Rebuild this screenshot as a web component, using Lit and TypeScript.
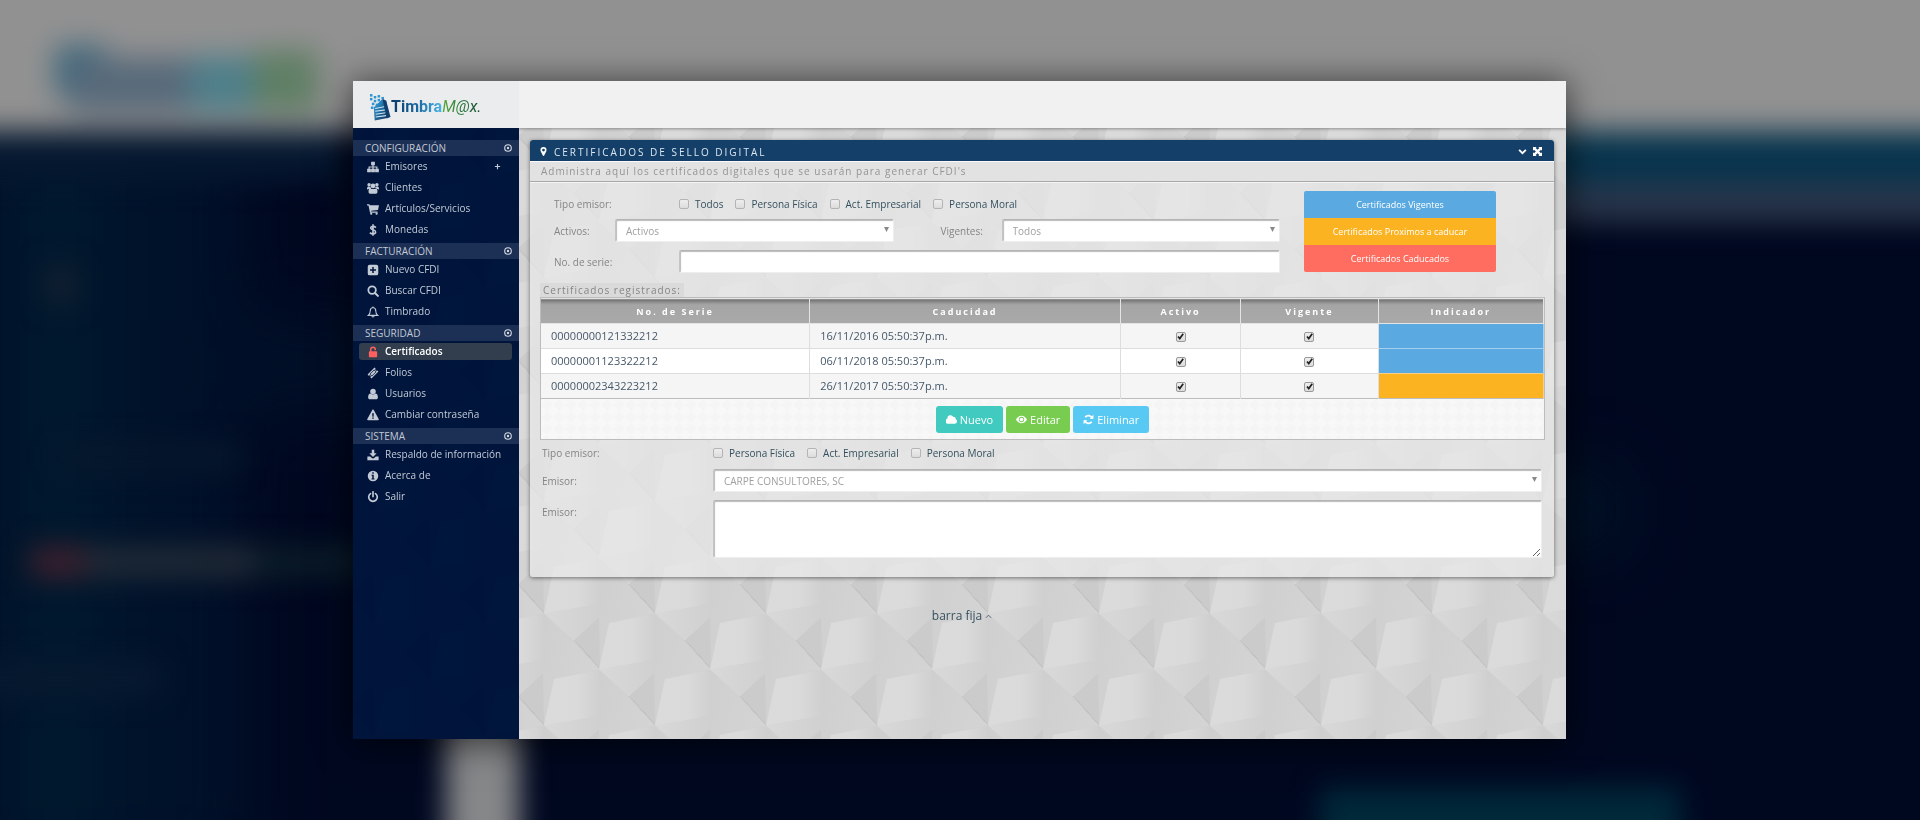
import { LitElement, html, css, svg, unsafeCSS } from "lit";
import { customElement, property, state } from "lit/decorators.js";
import { classMap } from "lit/directives/class-map.js";

const asUrl = (markup: string) => unsafeCSS(`url("data:image/svg+xml,${encodeURIComponent(markup)}")`);

// One faceted cell, anchored on its bottom tip; the tile repeats it in a brick layout.
const cell = (x: number, y: number) => `
  <g transform="translate(${x} ${y})">
    <polygon points="25,-82 81,-27 36,-17 26,29 25,-23" fill="url(#m)"/>
    <polygon points="0,0 25,-23 26,29" fill="#cbcbcb"/>
    <polygon points="0,0 12,13 26,29" stroke="#c6c6c6"/>
    <polygon points="-30,-27 -20,-73 25,-82 25,-23 0,0" fill="url(#l)"/>
    <polygon points="-30,-27 25,-36 25,-23 0,0" fill="url(#k)"/>
  </g>`;
const tile = `<svg xmlns="http://www.w3.org/2000/svg" width="111" height="112" viewBox="0 0 111 112">
  <defs>
    <linearGradient id="l" x1="0" y1="0" x2="1" y2="0"><stop offset="0" stop-color="#dbdbdb"/><stop offset=".6" stop-color="#dadada"/><stop offset="1" stop-color="#d0d0d0"/></linearGradient>
    <linearGradient id="k" x1="0" y1="0" x2="1" y2="0"><stop offset="0" stop-color="#d9d9d9"/><stop offset="1" stop-color="#d0d0d0"/></linearGradient>
    <linearGradient id="m" x1="0" y1="0" x2="1" y2=".4"><stop offset="0" stop-color="#cfcfcf"/><stop offset="1" stop-color="#d4d4d4"/></linearGradient>
  </defs>
  <rect width="111" height="112" fill="#d1d1d1"/>
  ${[-1, 0, 1, 2].map((r) => [-1, 0, 1].map((c) => cell(c * 111, r * 112) + cell(c * 111 + 56, r * 112 + 56)).join("")).join("")}
</svg>`;
const arrow = `<svg xmlns="http://www.w3.org/2000/svg" width="5" height="5"><path d="M0 0h5L2.500 5z" fill="#888"/></svg>`;
const check = `<svg xmlns="http://www.w3.org/2000/svg" viewBox="0 0 10 10"><path d="M2.200 5l2 2.300L8 2" fill="none" stroke="#222" stroke-width="1.900"/></svg>`;
const weave = `<svg xmlns="http://www.w3.org/2000/svg" width="12" height="12"><path d="M0 6l6-6 6 6-6 6z" fill="#f5f5f5"/></svg>`;

const icons: Record<string, unknown> = {
  sitemap: svg`<path d="M5.500 1h5v4.500H8.800v1.700H14v3h1.800v4.800H10.800v-4.800h1.600V8.800H8.800v1.400h1.700v4.800h-5v-4.800h1.700V8.800H3.600v1.400h1.600v4.800H.2v-4.800H2v-3h5.200V5.500H5.500z"/>`,
  users: svg`<circle cx="2.800" cy="3.600" r="2.300"/><circle cx="13.200" cy="3.600" r="2.300"/><circle cx="8" cy="5.200" r="3.100"/><path d="M0 9.500C0 7 .8 5.700 2.500 6.100c1 .4 1.900.3 2.200 0 0 1.500.6 2.400 1.300 3.300H2.500C.8 10 0 10.500 0 9.500zm16 0c0-2.500-.8-3.800-2.500-3.400-1 .4-1.900.3-2.200 0 0 1.500-.6 2.400-1.300 3.300h3.500c1.700.6 2.500 1.100 2.500.1zM2 13c0-2.600 1-4.600 2.900-4.500 1.800 1.100 4.400 1.100 6.200 0C13 8.400 14 10.400 14 13c0 1.600-.9 2.500-2.200 2.500H4.200C2.900 15.500 2 14.600 2 13z"/>`,
  cart: svg`<path d="M0 1.500h3.200l.5 1.500H16l-1.300 6.300-9.200 1.100.2.900H14v1.600H4L2 3.300H0z"/><circle cx="5.600" cy="14.300" r="1.500"/><circle cx="12.800" cy="14.300" r="1.500"/>`,
  dollar: svg`<path d="M11.800 4.800C10.700 3.600 9.500 3.200 8 3.200c-1.900 0-3.100.8-3.100 2.200 0 3.200 6.600 1.600 6.600 5.200 0 1.600-1.400 2.600-3.500 2.600-1.700 0-3.100-.6-4.100-1.700M8 .2v15.600" fill="none" stroke="currentColor" stroke-width="2.100"/>`,
  plusbox: svg`<path fill-rule="evenodd" d="M3.500 1h9A2.500 2.500 0 0 1 15 3.500v9a2.500 2.500 0 0 1-2.500 2.500h-9A2.500 2.500 0 0 1 1 12.500v-9A2.500 2.500 0 0 1 3.500 1zM7 4v3H4v2h3v3h2V9h3V7H9V4z"/>`,
  search: svg`<circle cx="6.800" cy="6.800" r="5" fill="none" stroke="currentColor" stroke-width="2.400"/><path d="M10.700 10.700l3.800 3.800" stroke="currentColor" stroke-width="2.800" stroke-linecap="round"/>`,
  bell: svg`<path d="M8 2C5.500 2.300 4.300 4 4.300 6.500c0 3-.8 4.700-2.600 6h12.600c-1.800-1.300-2.600-3-2.600-6C11.700 4 10.500 2.300 8 2zM8 .6V2M6.500 13c.1 1.100.7 1.700 1.500 1.700s1.400-.6 1.500-1.700" fill="none" stroke="currentColor" stroke-width="1.400"/>`,
  unlock: svg`<path d="M5 7.500V4.600a3 3 0 0 1 6 0v1" fill="none" stroke="currentColor" stroke-width="2"/><rect x="2.500" y="7" width="11" height="8" rx="1"/>`,
  ticket: svg`<path fill-rule="evenodd" d="M10 .8l1.500 1.500a1.500 1.500 0 0 0 2.200 2.200L15.200 6 6 15.200l-1.500-1.500a1.500 1.500 0 0 0-2.200-2.200L.8 10zM9.600 3.400L3.400 9.600l3 3 6.200-6.200zm0 1.300l1.700 1.700-4.900 4.900-1.700-1.700z"/><path d="M9.600 4.900l1.500 1.500-4.700 4.700-1.500-1.500z"/>`,
  user: svg`<circle cx="8" cy="4.800" r="3.700"/><path d="M1.500 12.600c0-3.300 1.200-5 3.400-5.200 1.900 1.500 4.300 1.500 6.200 0 2.200.2 3.400 1.900 3.400 5.200 0 1.600-1 2.400-2.300 2.400H3.800c-1.300 0-2.300-.8-2.300-2.400z"/>`,
  warning: svg`<path fill-rule="evenodd" d="M8 .8c.5 0 .8.200 1 .6l6.600 12c.4.800 0 1.600-1 1.600H1.400c-1 0-1.400-.8-1-1.600L7 1.400c.2-.4.500-.6 1-.6zM6.900 5.500l.3 4.700h1.600l.3-4.700zm.1 5.700v1.900h2v-1.900z"/>`,
  download: svg`<path d="M6.300 1h3.400v4.500h3.200L8 10.500l-4.900-5h3.200zM.5 10h3.800L6 11.700a2.800 2.800 0 0 0 4 0L11.700 10h3.800v5H.5z"/>`,
  info: svg`<path fill-rule="evenodd" d="M8 1a7 7 0 1 1 0 14A7 7 0 0 1 8 1zM7 3v2h2V3zM6 6.300v1.200h1v3.800H6v1.300h4v-1.300H9v-5z"/>`,
  power: svg`<path d="M4.700 3.400a5.700 5.700 0 1 0 6.600 0M8 1v6.500" fill="none" stroke="currentColor" stroke-width="2.200" stroke-linecap="round"/>`,
  target: svg`<circle cx="8" cy="8" r="6.600" fill="none" stroke="currentColor" stroke-width="2.200"/><circle cx="8" cy="8" r="2.400"/>`,
  plus: svg`<path d="M8 2v12M2 8h12" stroke="currentColor" stroke-width="2.600"/>`,
  marker: svg`<path fill-rule="evenodd" d="M8 0a5.400 5.400 0 0 1 5.400 5.400c0 1.500-.5 2.300-1 3.300L9.200 15.200c-.5 1-1.900 1-2.400 0L3.600 8.700c-.5-1-1-1.800-1-3.300A5.400 5.400 0 0 1 8 0zm0 2.900a2.500 2.500 0 1 0 0 5 2.500 2.500 0 0 0 0-5z"/>`,
  chevron: svg`<path d="M2 5l6 6 6-6" fill="none" stroke="currentColor" stroke-width="3.200"/>`,
  expand: svg`<path d="M0 0h6.500L4.700 1.800 8 5.100l3.300-3.300L9.500 0H16v6.500l-1.800-1.800L10.900 8l3.300 3.300L16 9.500V16H9.500l1.800-1.800L8 10.900l-3.300 3.300L6.500 16H0V9.500l1.800 1.800L5.100 8 1.800 4.700 0 6.500z"/>`,
  cloud: svg`<path d="M3.700 14A3.700 3.700 0 0 1 1.900 6.800 4.600 4.600 0 0 1 10.600 4.300a2.700 2.700 0 0 1 3.400 3.300A3.300 3.300 0 0 1 12.900 14z"/>`,
  eye: svg`<path fill-rule="evenodd" d="M8 2.600c3.300 0 6.200 2 8 5.400-1.800 3.400-4.700 5.400-8 5.400S1.800 11.400 0 8c1.800-3.400 4.700-5.400 8-5.400zm0 1.500a3.900 3.900 0 1 0 0 7.800 3.900 3.900 0 0 0 0-7.800z"/><circle cx="8" cy="8" r="2.700"/>`,
  refresh: svg`<path d="M13.500 6.500A5.800 5.800 0 0 0 3.300 4.600M2.500 9.500a5.800 5.800 0 0 0 10.200 1.900" fill="none" stroke="currentColor" stroke-width="2.500"/><path d="M15.200 1.200v5.600H9.600zM.8 14.800V9.200h5.600z"/>`,
  caret: svg`<path d="M2 11l6-6 6 6" fill="none" stroke="currentColor" stroke-width="1.800"/>`,
};
const icon = (name: string, cls = "") => html`<svg class="icon ${cls}" viewBox="0 0 16 16" fill="currentColor" aria-hidden="true">${icons[name]}</svg>`;

const shared = css`
  :host, * { box-sizing: border-box; }
  .icon { width: 12px; height: 12px; flex: none; display: block; }
  button { font: inherit; color: inherit; border: 0; background: none; padding: 0; cursor: pointer; }
`;

interface Entry { label: string; icon: string; active?: boolean; expandable?: boolean; }
const menu: { title: string; entries: Entry[] }[] = [
  { title: "CONFIGURACIÓN", entries: [
    { label: "Emisores", icon: "sitemap", expandable: true },
    { label: "Clientes", icon: "users" },
    { label: "Artículos/Servicios", icon: "cart" },
    { label: "Monedas", icon: "dollar" } ] },
  { title: "FACTURACIÓN", entries: [
    { label: "Nuevo CFDI", icon: "plusbox" },
    { label: "Buscar CFDI", icon: "search" },
    { label: "Timbrado", icon: "bell" } ] },
  { title: "SEGURIDAD", entries: [
    { label: "Certificados", icon: "unlock", active: true },
    { label: "Folios", icon: "ticket" },
    { label: "Usuarios", icon: "user" },
    { label: "Cambiar contraseña", icon: "warning" } ] },
  { title: "SISTEMA", entries: [
    { label: "Respaldo de información", icon: "download" },
    { label: "Acerca de", icon: "info" },
    { label: "Salir", icon: "power" } ] },
];

@customElement("side-menu")
export class SideMenu extends LitElement {
  static styles = [shared, css`
    :host { display: block; padding-top: 12px; color: #c2cad6; position: relative; background: #001030; }
    :host::before { content: ""; position: absolute; inset: 0; background: ${asUrl(tile)} -4px 19px; mix-blend-mode: color-dodge; opacity: .06; }
    .group { position: relative; padding-bottom: 2px; }
    .title { display: flex; align-items: center; justify-content: space-between; height: 16px; margin: 0; padding: 0 7px 0 12px; background: #1c2f55; font-size: 10px; font-weight: 400; line-height: 16px; }
    .title .icon { width: 8px; height: 8px; color: #d5dbe6; }
    .list { list-style: none; margin: 0; padding: 0 7px 1px 6px; }
    .link { display: flex; align-items: center; gap: 6px; height: 17px; margin: 2px 0; padding: 0 8px; border-radius: 3px; color: inherit; text-decoration: none; font-size: 10px; line-height: 17px; white-space: nowrap; }
    .item { display: flow-root; height: 21px; }
    .active { background: #323e4e; color: #fff; font-weight: 600; }
    .active .icon { color: #ff5f5f; }
    .more { width: 7px; height: 7px; margin: 0 3px 0 auto; }
  `];
  render() {
    return html`<nav aria-label="Principal">${menu.map((g) => html`
      <section class="group">
        <h2 class="title">${g.title}${icon("target")}</h2>
        <ul class="list">${g.entries.map((e) => html`
          <li class="item"><a href="#" class=${classMap({ link: true, active: !!e.active })}>
            ${icon(e.icon)}<span>${e.label}</span>${e.expandable ? icon("plus", "more") : ""}
          </a></li>`)}</ul>
      </section>`)}</nav>`;
  }
}

@customElement("brand-logo")
export class BrandLogo extends LitElement {
  static styles = [shared, css`
    :host { display: flex; align-items: center; height: 47px; padding: 5px 0 0 16px; background: #ebecee; }
    .mark { width: 22px; height: 28px; flex: none; }
    .name { font: 700 16px/24px Roboto, sans-serif; white-space: nowrap; }
    .blue { color: transparent; background: linear-gradient(90deg, #0b3a66, #17679f 50%, #46b4e6); background-clip: text; -webkit-background-clip: text; }
    .green { color: transparent; background: linear-gradient(90deg, #5aa93c, #2a7a3c 50%, #144a30); background-clip: text; -webkit-background-clip: text; font-weight: 400; font-style: italic; }
  `];
  render() {
    const dots = [[1, 1], [5, 3], [1, 5], [9, 2], [13, 4], [5, 7], [9, 6], [3, 10], [7, 11], [13, 8], [2, 14], [11, 10]];
    return html`
      <svg class="mark" viewBox="0 0 23 29" aria-hidden="true">
        <defs><linearGradient id="g" x1="0" y1="0" x2="1" y2="1"><stop offset="0" stop-color="#3aa9e4"/><stop offset="1" stop-color="#0a2f5a"/></linearGradient></defs>
        ${dots.map(([x, y]) => svg`<rect x=${x} y=${y} width="2.600" height="2.600" fill="#2e95d0"/>`)}
        <path d="M5 15l8-8 5 1 1 18-13 2.500z" fill="url(#g)"/>
        <path d="M6.500 16l10.500-2M6.500 19l11-1.500M7 22l10.500-1.500M7 25l11-1.500" stroke="#cfe4f2" stroke-width="1.100"/>
        <path d="M14 6l4 2 4.500 17-4 1.500z" fill="#0f3f6e"/>
      </svg>
      <span class="name"><span class="blue">Timbra</span><span class="green">M@x.</span></span>`;
  }
}

const fields = css`
  .checks { display: flex; align-items: center; gap: 12px; }
  .check { display: flex; align-items: center; gap: 6px; color: #34505e; white-space: nowrap; }
  input[type="checkbox"] { appearance: none; width: 10px; height: 10px; margin: 0; border: 1px solid #b4b4b4; border-radius: 2px; background: linear-gradient(#eee, #dcdcdc); display: inline-block; vertical-align: middle; }
  input[type="checkbox"]:checked { background: ${asUrl(check)} center / 9px 9px no-repeat, linear-gradient(#eee, #dcdcdc); }
  .label { color: #858585; white-space: nowrap; }
  .control { display: block; width: 100%; min-width: 0; height: 23px; margin: 0; padding: 0 10px; border: 1px solid #ccc; border-color: #b4b4b4 #eee #eee #c4c4c4; border-radius: 2px; background: #fff; box-shadow: inset 1px 1px 1px #bbb; font: 10px/20px "Open Sans", sans-serif; color: #a0a0a0; }
  select.control { appearance: none; background: #fff ${asUrl(arrow)} right 4px top 7px no-repeat; }
`;

interface Certificate { serial: string; expires: string; active: boolean; valid: boolean; status: "ok" | "soon"; }

@customElement("certificate-panel")
export class CertificatePanel extends LitElement {
  @property({ attribute: false }) rows: Certificate[] = [
    { serial: "00000000121332212", expires: "16/11/2016 05:50:37p.m.", active: true, valid: true, status: "ok" },
    { serial: "00000001123322212", expires: "06/11/2018 05:50:37p.m.", active: true, valid: true, status: "ok" },
    { serial: "00000002343223212", expires: "26/11/2017 05:50:37p.m.", active: true, valid: true, status: "soon" },
  ];
  @state() private open = true;

  static styles = [shared, fields, css`
    :host { display: block; border-radius: 3px; background: rgba(234, 234, 234, .7); box-shadow: 0 1px 4px rgba(0, 0, 0, .5); font-size: 10px; line-height: 16px; }
    .head { display: flex; align-items: center; gap: 6px; height: 21px; padding: 2px 12px 0 9px; border-radius: 3px 3px 0 0; background: #143f69; color: #dbe6f0; }
    .head .icon { width: 9px; height: 9px; color: #fff; }
    .heading { margin: 0 auto 0 0; font-size: 10px; font-weight: 400; line-height: 18px; letter-spacing: 2px; }
    .intro { margin: 0; height: 21px; padding-left: 11px; border-top: 1px solid #fafafa; border-bottom: 1px solid #a8a8a8; background: #e2e2e2; color: #949494; line-height: 18px; letter-spacing: 1px; box-shadow: 0 1px 0 #f4f4f4; }
    .filters { display: grid; grid-template-columns: minmax(0, 1fr) 192px; gap: 24px; padding: 9px 58px 0 24px; }
    .fields { display: flex; flex-direction: column; }
    .row { display: grid; grid-template-columns: 125px minmax(0, 1fr); align-items: center; }
    .first { height: 26px; margin-bottom: 2px; }
    .pair { grid-template-columns: 61px minmax(0, 325fr) 61px minmax(0, 278fr); margin-bottom: 8px; }
    .left { margin-right: 47px; }
    .legend { display: flex; flex-direction: column; }
    .key { height: 27px; color: #fff; font-size: 9px; line-height: 27px; text-align: center; }
    .key:first-child { border-radius: 2px 2px 0 0; }
    .key:last-child { border-radius: 0 0 2px 2px; }
    .ok { background: #5aaae1; }
    .soon { background: #fcb322; }
    .late { background: #ff6c60; }
    .caption { display: block; width: max-content; height: 14px; margin: 10px 0 0 10px; padding: 0 3px; background: #dadada; color: #858585; font-size: 10px; line-height: 14px; letter-spacing: 1px; }
    .grid { margin: 0 9px 0 10px; border: 1px solid #bcbcbc; background: #f5f5f5; }
    .table { width: 100%; border-collapse: collapse; table-layout: fixed; color: #46586a; border-bottom: 1px solid #bdbdbd; font-size: 11px; }
    .table th { height: 25px; padding: 2px 0 0; border: solid #e4e4e4; border-width: 1px 1px 1px 0; background: linear-gradient(#707070, #a5a5a5 5px, #a9a9a9); color: #fff; font-size: 9px; font-weight: 700; line-height: 20px; letter-spacing: 2px; }
    .table td { height: 25px; padding: 0 10px; border: solid #ddd; border-width: 1px 1px 0 0; line-height: 20px; }
    .table tr:nth-child(odd) td { background-color: #f5f5f5; }
    .table tr:nth-child(even) td { background-color: #fff; }
    .table tr td.center { text-align: center; line-height: 10px; }
    .table tr td.ok { background-color: #5aaae1; border-color: #a6d0ef; }
    .table tr td.soon { background-color: #fcb322; border-color: #f3d08a; }
    .c1 { width: 26.800%; } .c2 { width: 31%; } .c3 { width: 12%; } .c4 { width: 13.700%; }
    .table input { border-color: #999; }
    .actions { display: flex; justify-content: center; gap: 3px; height: 40px; padding-top: 7px; background: #f8f8f8 ${asUrl(weave)}; }
    .button { display: flex; align-items: center; gap: 3px; height: 27px; padding: 0 10px; border-radius: 3px; color: #fff; font-size: 11px; line-height: 27px; }
    .teal { background: #41cac0; } .green { background: #78cd51; } .sky { background: #58c9f3; }
    .button .icon { width: 11px; height: 11px; }
    .detail { display: grid; grid-template-columns: 171px minmax(0, 1fr); padding: 5px 12px 19px; row-gap: 8px; align-items: center; }
    .top { align-self: start; padding-top: 4px; }
    textarea.control { height: 58px; resize: vertical; }
  `];

  private checks(prefix: string, names: string[]) {
    return html`<div class="checks" role="group" aria-label="Tipo emisor">${names.map((n, i) => html`
      <label class="check" for="${prefix}${i}"><input type="checkbox" id="${prefix}${i}" />${n}</label>`)}</div>`;
  }

  render() {
    return html`
      <header class="head">${icon("marker")}
        <h1 class="heading">CERTIFICADOS DE SELLO DIGITAL</h1>
        <button aria-label="Contraer" @click=${() => (this.open = !this.open)}>${icon("chevron")}</button>
        <button aria-label="Expandir">${icon("expand")}</button>
      </header>
      ${this.open ? this.body() : ""}`;
  }

  private body() {
    return html`
      <p class="intro">Administra aquí los certificados digitales que se usarán para generar CFDI's</p>
      <div class="filters">
        <div class="fields">
          <div class="row first"><span class="label">Tipo emisor:</span>${this.checks("f", ["Todos", "Persona Física", "Act. Empresarial", "Persona Moral"])}</div>
          <div class="row pair">
            <label class="label" for="act">Activos:</label>
            <div class="left"><select class="control" id="act"><option>Activos</option></select></div>
            <label class="label" for="vig">Vigentes:</label>
            <select class="control" id="vig"><option>Todos</option></select>
          </div>
          <div class="row"><label class="label" for="serie">No. de serie:</label><input class="control" id="serie" type="text" /></div>
        </div>
        <div class="legend">
          <button class="key ok">Certificados Vigentes</button>
          <button class="key soon">Certificados Proximos a caducar</button>
          <button class="key late">Certificados Caducados</button>
        </div>
      </div>
      <span class="caption" id="cap">Certificados registrados:</span>
      <div class="grid">
        <table class="table" aria-labelledby="cap">
          <thead><tr><th class="c1">No. de Serie</th><th class="c2">Caducidad</th><th class="c3">Activo</th><th class="c4">Vigente</th><th>Indicador</th></tr></thead>
          <tbody>${this.rows.map((r) => html`<tr>
            <td>${r.serial}</td><td>${r.expires}</td>
            <td class="center"><input type="checkbox" aria-label="Activo" .checked=${r.active} /></td>
            <td class="center"><input type="checkbox" aria-label="Vigente" .checked=${r.valid} /></td>
            <td class=${r.status}></td></tr>`)}</tbody>
        </table>
        <div class="actions">
          <button class="button teal">${icon("cloud")}Nuevo</button>
          <button class="button green">${icon("eye")}Editar</button>
          <button class="button sky">${icon("refresh")}Eliminar</button>
        </div>
      </div>
      <div class="detail">
        <span class="label">Tipo emisor:</span>${this.checks("d", ["Persona Física", "Act. Empresarial", "Persona Moral"])}
        <label class="label" for="em">Emisor:</label><select class="control" id="em"><option>CARPE CONSULTORES, SC</option></select>
        <label class="label top" for="tx">Emisor:</label><textarea class="control" id="tx"></textarea>
      </div>`;
  }
}

@customElement("app-root")
export class AppRoot extends LitElement {
  static styles = [shared, css`
    :host { display: flex; position: relative; min-height: 100vh; padding: 81px 354px 81px 353px; font-family: "Open Sans", sans-serif; background: #000820; overflow: hidden; }
    .backdrop { position: absolute; inset: 0; width: 100%; height: 100%; }
    .window { position: relative; flex: 1; min-width: 0; display: grid; grid-template: auto 1fr / 166px minmax(0, 1fr); box-shadow: 0 3px 32px 2px rgba(0, 0, 0, .6); }
    .bar { background: #f1f1f1; box-shadow: 0 1px 3px rgba(0, 0, 0, .35); clip-path: inset(0 0 -6px 0); z-index: 1; }
    .main { padding: 12px 12px 24px 11px; background: ${asUrl(tile)} -1px 8px; }
    .foot { display: flex; justify-content: center; padding: 31px 160px 0 0; }
    .fixed { display: flex; align-items: center; gap: 3px; color: #34505e; font-size: 12px; line-height: 16px; }
    .fixed .icon { width: 7px; height: 7px; }
    @media (max-width: 1400px) { :host { padding: 48px 24px; } }
  `];
  render() {
    return html`
      <svg class="backdrop" viewBox="0 0 1920 820" preserveAspectRatio="none" aria-hidden="true">
        <defs>
          <filter id="b" x="-20%" y="-50%" width="140%" height="200%" color-interpolation-filters="sRGB"><feGaussianBlur stdDeviation="14"/></filter>
          <filter id="w" x="-50%" y="-50%" width="200%" height="200%" color-interpolation-filters="sRGB"><feGaussianBlur stdDeviation="36"/></filter>
        </defs>
        <rect width="1920" height="820" fill="#000820"/>
        <g filter="url(#w)">
          <rect x="-60" y="110" width="300" height="760" fill="#00122a"/>
          <rect x="30" y="120" width="60" height="760" fill="#001c30"/>
          <rect x="180" y="320" width="200" height="90" fill="#001028"/>
          <rect x="1540" y="480" width="70" height="60" fill="#001c2c"/>
        </g>
        <g filter="url(#b)">
          <rect x="1200" y="110" width="900" height="76" fill="#08344d"/>
          <rect x="1200" y="184" width="900" height="38" fill="#29364b"/>
          <rect x="-60" y="130" width="400" height="50" fill="#051830"/>
          <rect x="60" y="445" width="180" height="25" fill="#07182c"/>
          <rect x="46" y="265" width="30" height="40" fill="#142030"/>
          <rect x="30" y="546" width="56" height="32" fill="#3c202d"/>
          <rect x="86" y="546" width="170" height="32" fill="#202a36"/>
          <rect x="256" y="546" width="110" height="32" fill="#0a1c28"/>
          <rect x="-40" y="662" width="200" height="34" fill="#07192f"/>
          <rect x="1320" y="788" width="360" height="80" fill="#00293a"/>
          <rect x="446" y="600" width="74" height="300" fill="#868789"/>
          <rect x="-80" y="-60" width="2100" height="191" fill="#919191"/>
          <rect x="56" y="46" width="50" height="50" fill="#36667d"/>
          <rect x="70" y="58" width="140" height="54" fill="#586a7a"/>
          <rect x="190" y="56" width="66" height="56" fill="#4f7f8a"/>
          <rect x="254" y="50" width="64" height="62" fill="#607f65"/>
        </g>
      </svg>
      <div class="window">
        <brand-logo></brand-logo>
        <div class="bar"></div>
        <side-menu></side-menu>
        <main class="main">
          <certificate-panel></certificate-panel>
          <footer class="foot"><button class="fixed">barra fija ${icon("caret")}</button></footer>
        </main>
      </div>`;
  }
}
